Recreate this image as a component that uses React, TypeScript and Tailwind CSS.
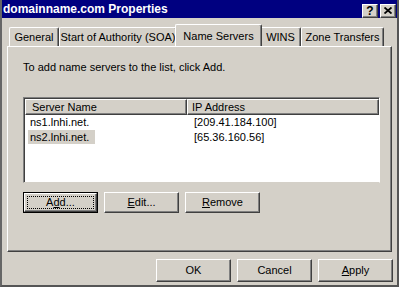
import React from "react";

const raised =
  "border-t border-l border-t-white border-l-white border-r border-b border-r-[#404040] border-b-[#404040] shadow-[inset_-1px_-1px_#808080]";

const Btn = ({ children, w = "w-[75px]", h = "h-[23px]" }: { children: React.ReactNode; w?: string; h?: string }) => (
  <div className={`${w} ${h} bg-[#d4d0c8] ${raised} flex items-center justify-center text-black`}>{children}</div>
);

const Tab = ({ label, w, active }: { label: string; w: string; active?: boolean }) =>
  active ? (
    <div className={`${w} relative z-10 -mx-[2px] h-[22px] bg-[#d4d0c8] border-t border-l border-t-white border-l-white border-r border-r-[#404040] shadow-[inset_-1px_0_#808080] rounded-t-[2px] flex justify-center items-start pt-[3px] whitespace-nowrap`}>
      {label}
    </div>
  ) : (
    <div className={`${w} h-[19px] bg-[#d4d0c8] border-t border-l border-t-white border-l-white border-r border-r-[#404040] shadow-[inset_-1px_0_#808080] rounded-t-[2px] flex justify-center items-center pt-[1px] whitespace-nowrap`}>
      {label}
    </div>
  );

export default function App() {
  return (
    <div
      className="w-[399px] h-[287px] bg-[#d4d0c8] border-l-2 border-r-2 border-b-2 border-l-[#666] border-r-[#555] border-b-[#555] flex flex-col text-[11px] text-black overflow-hidden"
      style={{ fontFamily: '"Liberation Sans", Arial, sans-serif' }}
    >
      {/* title bar */}
      <div className="h-[18px] shrink-0 bg-[#000080] flex items-center justify-between pl-[1px] pr-[1px]">
        <span className="text-white font-bold text-[12px] leading-none">domainname.com Properties</span>
        <div className="flex gap-[2px] mt-[3px]">
          <div className={`w-[16px] h-[14px] bg-[#d4d0c8] ${raised} flex items-center justify-center font-bold text-[12px] leading-none`}>?</div>
          <div className={`w-[16px] h-[14px] bg-[#d4d0c8] ${raised} flex items-center justify-center`}>
            <svg width="8" height="7" viewBox="0 0 8 7">
              <path d="M0.5 0.5 L7.5 6.5 M7.5 0.5 L0.5 6.5" stroke="black" strokeWidth="1.8" />
            </svg>
          </div>
        </div>
      </div>

      {/* tabs */}
      <div className="mt-[7px] ml-[5px] mr-[5px] flex flex-col">
        <div className="flex items-end pl-[2px] h-[21px]">
          <Tab label="General" w="w-[50px]" />
          <Tab label="Start of Authority (SOA)" w="w-[118px]" />
          <Tab label="Name Servers" w="w-[87px]" active />
          <Tab label="WINS" w="w-[41px]" />
          <Tab label="Zone Transfers" w="w-[83px]" />
        </div>
        <div className="h-[206px] border-t border-l border-t-white border-l-white border-r border-b border-r-[#404040] border-b-[#404040] shadow-[inset_-1px_-1px_#808080] px-[15px] pt-[14px]">
          <div className="leading-[13px]">To add name servers to the list, click Add.</div>
          <div className="mt-[23px] h-[86px] w-[357px] bg-white border-t border-l border-t-[#808080] border-l-[#808080] border-r border-b border-r-white border-b-[#d4d0c8] shadow-[inset_1px_1px_#404040]">
            <div className="flex pl-[1px] pt-[1px]">
              <div className={`w-[162px] h-[16px] bg-[#d4d0c8] ${raised} pl-[6px] flex items-center`}>Server Name</div>
              <div className={`w-[192px] h-[16px] bg-[#d4d0c8] ${raised} pl-[4px] flex items-center`}>IP Address</div>
            </div>
            <div className="flex h-[15px] items-center">
              <div className="w-[163px] pl-[4px]"><span className="px-[2px]">ns1.lnhi.net.</span></div>
              <div className="pl-[7px]">[209.41.184.100]</div>
            </div>
            <div className="flex h-[15px] items-center">
              <div className="w-[163px] pl-[4px]"><span className="px-[2px] bg-[#d4d0c8] inline-block leading-[14px] pr-[6px]">ns2.lnhi.net.</span></div>
              <div className="pl-[7px]">[65.36.160.56]</div>
            </div>
          </div>
          <div className="mt-[9px] flex gap-[6px]">
            <div className="w-[75px] h-[21px] border border-black">
              <div className={`w-full h-full bg-[#d4d0c8] ${raised} p-[2px]`}>
                <div className="w-full h-full border border-dotted border-black flex items-center justify-center">
                  <span>A<u>d</u>d...</span>
                </div>
              </div>
            </div>
            <Btn h="h-[21px]"><span><u>E</u>dit...</span></Btn>
            <Btn h="h-[21px]"><span><u>R</u>emove</span></Btn>
          </div>
        </div>
      </div>

      {/* bottom buttons */}
      <div className="mt-[7px] flex justify-end gap-[6px] pr-[4px]">
        <Btn>OK</Btn>
        <Btn>Cancel</Btn>
        <Btn><span><u>A</u>pply</span></Btn>
      </div>
    </div>
  );
}
